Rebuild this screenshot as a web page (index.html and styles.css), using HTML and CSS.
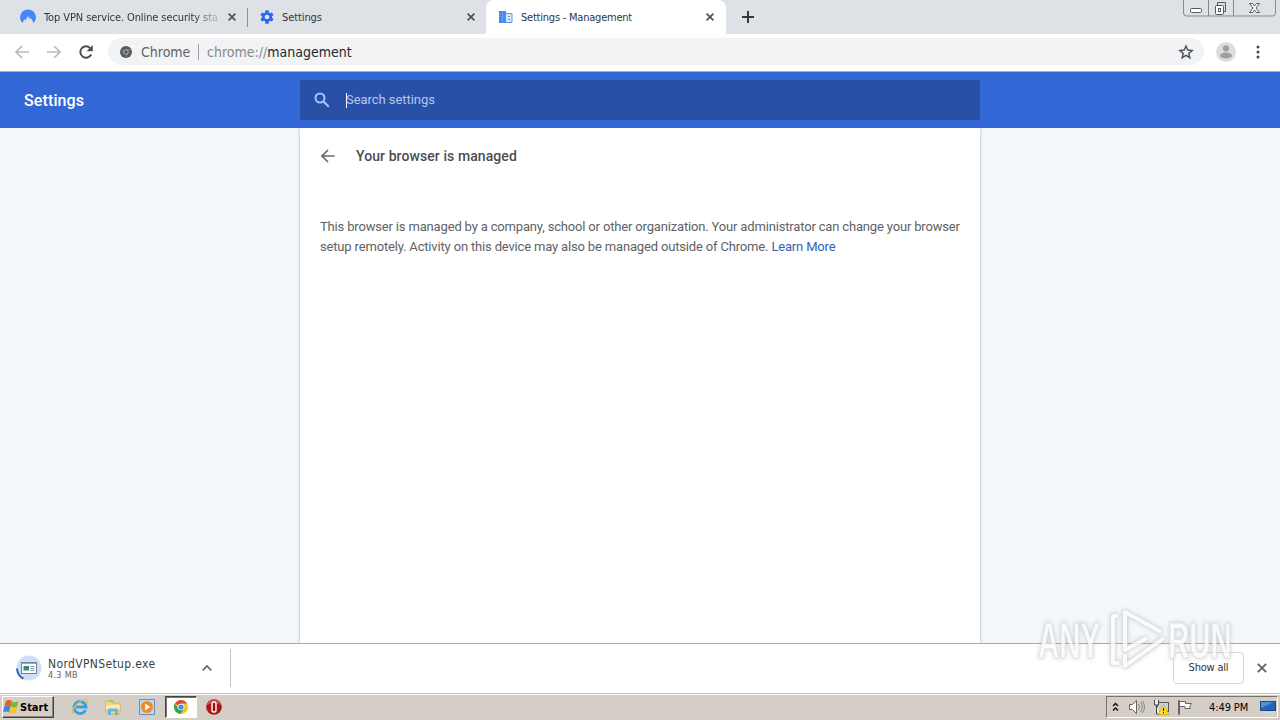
FILE: index.html
```html
<!DOCTYPE html>
<html lang="en">
<head>
    <meta charset="UTF-8">
    <meta name="viewport" content="width=device-width, initial-scale=1.0">
    <title>Settings - Management</title>
    <link rel="stylesheet" href="styles.css">
</head>
<body>
    <div class="screen">
        <!-- Tab strip -->
        <div class="tabs">
            <div class="tab tab-nord">
                <svg class="favicon" viewBox="0 0 16 16"><path d="M2.2 14A8 8 0 1 1 13.8 14L10.6 8.8 9.8 10.3 8 7 5.2 11.4 4.8 10.2Z" fill="#4687ff"/></svg>
                <span class="tab-title fade">Top VPN service. Online security sta</span>
                <svg class="close" viewBox="0 0 8 8"><path d="M.6.6l6.8 6.8M7.4.6L.6 7.4"/></svg>
            </div>
            <div class="tab tab-settings">
                <svg class="favicon" viewBox="0 0 24 24"><path fill="#2a6ae8" fill-rule="evenodd" d="M21 13.1a8 8 0 0 0 0-2.2l2.2-1.8-2.3-4-2.8 1.1a9 9 0 0 0-1.8-1L15.8 2h-4.700L10.600 5.200a9 9 0 0 0-1.800 1L5.900 5.100l-2.300 4 2.300 1.800a8 8 0 0 0 0 2.200l-2.300 1.800 2.300 4 2.900-1.100a9 9 0 0 0 1.800 1l.5 3.200h4.700l.5-3.200a9 9 0 0 0 1.800-1l2.800 1.100 2.300-4zM13.400 8.500a3.500 3.500 0 1 1 0 7 3.500 3.500 0 0 1 0-7z" transform="translate(-1.4 0)"/></svg>
                <span class="tab-title">Settings</span>
                <svg class="close" viewBox="0 0 8 8"><path d="M.6.6l6.8 6.8M7.4.6L.6 7.4"/></svg>
            </div>
            <div class="tab tab-active">
                <svg class="favicon" viewBox="0 0 16 16"><path d="M1 2h7v12H1z" fill="#4285f4"/><path d="M8 4.500h6v9H8" fill="#dce8fd" stroke="#5c93f5"/><path d="M10 7.500h2M10 10.500h2" stroke="#5c93f5"/><path d="M1 5h7M1 8h7M1 11h7M4.500 2v12" stroke="#7eabf9" stroke-width=".5"/></svg>
                <span class="tab-title">Settings - Management</span>
                <svg class="close" viewBox="0 0 8 8"><path d="M.6.6l6.8 6.8M7.4.6L.6 7.4"/></svg>
            </div>
            <svg class="new-tab" viewBox="0 0 12 12"><path d="M6 0v12M0 6h12" stroke="#33373c" stroke-width="2"/></svg>
            <div class="window-buttons">
                <svg viewBox="0 0 93 17" fill="none" stroke="#555a62"><path d="M.5 0v13q0 3 3 3h86q3 0 3-3V0M25.500 0v16M50.500 0v16" stroke="#858991"/><rect x="7.500" y="8.500" width="11" height="4" rx="1" fill="#fff"/><path d="M34.500 5.500v-3h8v9h-2"/><rect x="32.500" y="5.500" width="8" height="9" rx="1" fill="#fff"/><rect x="35.500" y="8.500" width="2" height="3"/><path d="M66.500 3.500h3l2 2.500 2-2.500h3l-3.500 4.500 3.500 4.500h-3l-2-2.500-2 2.500h-3L70 8z" fill="#fff"/></svg>
            </div>
        </div>

        <!-- Toolbar -->
        <div class="toolbar">
            <svg class="nav" viewBox="0 0 16 16"><path d="M15 8H2M8 2L2 8l6 6" stroke="#b9babd"/></svg>
            <svg class="nav" viewBox="0 0 16 16"><path d="M1 8h13M8 2l6 6-6 6" stroke="#b9babd"/></svg>
            <svg class="nav" viewBox="0 0 16 16"><path d="M13.200 10.500A5.700 5.700 0 1 1 12.500 4.500" stroke="#4c4f54" stroke-width="2"/><path d="M14.800 1v6.200H8.600z" fill="#4c4f54"/></svg>
            <div class="omnibox">
                <svg class="chrome-mono" viewBox="0 0 12 12"><circle cx="6" cy="6" r="6" fill="#55595e"/><circle cx="6" cy="6" r="2.300" fill="#55595e" stroke="#c9ccd0" stroke-width=".8"/><path d="M6 3.700h5M3.900 7.200L1.400 3.200M8 7.200L6 11" stroke="#b6babe" stroke-width=".5"/></svg>
                <span class="scheme">Chrome</span>
                <span class="divider"></span>
                <span class="url"><span class="url-dim">chrome://</span>management</span>
                <svg class="star" viewBox="0 0 24 24"><path d="M12 3l2.600 6.100 6.600.6-5 4.300 1.500 6.500L12 17l-5.700 3.500L7.800 14l-5-4.300 6.600-.6z" fill="none" stroke="#4f5358" stroke-width="2.200"/></svg>
            </div>
            <svg class="avatar" viewBox="0 0 20 20"><circle cx="10" cy="10" r="10" fill="#dcdddf"/><circle cx="10" cy="6.400" r="3.100" fill="#9c9ea1"/><ellipse cx="10" cy="13.500" rx="6" ry="3" fill="#9c9ea1"/></svg>
            <svg class="kebab" viewBox="0 0 4 14"><g fill="#45484c"><circle cx="2" cy="2" r="1.500"/><circle cx="2" cy="7" r="1.500"/><circle cx="2" cy="12" r="1.500"/></g></svg>
        </div>

        <!-- Settings header -->
        <div class="header">
            <h1 class="header-title">Settings</h1>
            <div class="search">
                <svg class="search-icon" viewBox="0 0 16 16"><circle cx="6" cy="6" r="4.500"/><path d="M9.300 9.300l5.500 5.500"/></svg>
                <span class="caret"></span>
                <span class="search-text">Search settings</span>
            </div>
        </div>

        <div class="content">
            <div class="card">
                <div class="card-head">
                    <svg class="back" viewBox="0 0 14 14"><path d="M13.500 7H1.500M7 1L1 7l6 6"/></svg>
                    <h2 class="card-title">Your browser is managed</h2>
                </div>
                <p class="message">This browser is managed by a company, school or other organization. Your administrator can change your browser<br>setup remotely. Activity on this device may also be managed outside of Chrome. <a class="link">Learn More</a></p>
            </div>
        </div>

        <!-- Download shelf -->
        <div class="shelf">
            <svg class="file-icon" viewBox="0 0 26 26"><circle cx="13" cy="13" r="12.500" fill="#cfe0f5"/><path d="M1 13.500A12 12 0 0 0 7.500 23.700" fill="none" stroke="#2f66c9" stroke-width="2"/><rect x="5.500" y="7.500" width="15" height="11" fill="#fff" stroke="#71808a"/><path d="M5 8h16" stroke="#71909f" stroke-width="1.500"/><path d="M7.500 11h5.500v4.500H7.500z" fill="#3c8577"/><path d="M14.500 11.500h4M14.500 13.500h4M14.500 15.500h4" stroke="#8b9bab"/></svg>
            <div class="file">
                <div class="file-name">NordVPNSetup.exe</div>
                <div class="file-size">4.3 MB</div>
            </div>
            <svg class="chevron" viewBox="0 0 10 6"><path d="M.7 5.300L5 1l4.300 4.300"/></svg>
            <span class="shelf-line"></span>
            <button class="show-all">Show all</button>
            <svg class="shelf-close" viewBox="0 0 10 10"><path d="M.8.8l8.400 8.400M9.200.8L.8 9.200"/></svg>
        </div>

        <!-- Taskbar -->
        <div class="taskbar">
            <div class="start">
                <svg class="flag" viewBox="0 0 16 16"><path d="M3 2q3-2 6 0L7.500 7.500Q4.500 5.500 1.500 7.500z" fill="#e65c23"/><path d="M9 2.500q3 1.500 6.500 0L14 8Q11 9.500 7.500 7.500z" fill="#7bb936"/><path d="M1.500 7.500q3-2 6 0L6 13.500Q3 11.500 0 13.500z" fill="#3b86d8"/><path d="M7.500 8q3 1.500 6.500 0l-1.500 6q-3 1.500-6.500-.5z" fill="#f7c331"/></svg>
                <span class="start-text">Start</span>
            </div>
            <svg class="task task-ie" viewBox="0 0 18 18"><path d="M14.500 12A6 6 0 1 1 15 9H5" fill="none" stroke="#34a2df" stroke-width="2.800"/><path d="M2 15.500C-2 12 12-1 16.500 2c1 1 .5 2.500-.5 4" fill="none" stroke="#e6bd4a" stroke-width="1.300"/></svg>
            <svg class="task task-folder" viewBox="0 0 18 18"><path d="M1.500 3h6l1.500 2h7v11h-14z" fill="#f1d583" stroke="#d8b659"/><path d="M3.500 2h6v3" fill="#8cc879"/><path d="M2 7h14v4H2z" fill="#fbeaae"/><path d="M4 17v-5q0-1.500 1.500-1.500h7q1.500 0 1.500 1.500v5h-3v-3.500H7V17z" fill="#62b7e3"/></svg>
            <svg class="task task-player" viewBox="0 0 18 18"><path d="M1.500 1.500h15v15h-15z" fill="#b9d8f2" stroke="#5b93c8"/><circle cx="9" cy="9" r="6" fill="#f28a1d"/><path d="M7.200 5.500l5 3.500-5 3.500z" fill="#fff"/></svg>
            <div class="task-active">
                <svg class="chrome" viewBox="0 0 14 14"><circle cx="7" cy="7" r="7" fill="#efc52f"/><path d="M7 7L1 3.400A7 7 0 0 1 13.100 3.600H7z" fill="#dc4939"/><path d="M1 3.400A7 7 0 0 0 6.500 14L10 8.800 4 8.500z" fill="#34a353"/><circle cx="7" cy="7" r="3.300" fill="#fff"/><circle cx="7" cy="7" r="2.600" fill="#4586ee"/></svg>
            </div>
            <svg class="task-opera" viewBox="0 0 16 16"><circle cx="8" cy="8" r="7.800" fill="#a91719"/><path d="M1 6a7.200 7.200 0 0 1 14 0Q8 2 1 6" fill="#d74b48"/><rect x="6" y="3" width="4" height="10" rx="1.800" fill="#9d1215" stroke="#fff" stroke-width="1.400"/></svg>
            <div class="tray">
                <svg class="tray-up" viewBox="0 0 7 10"><path d="M1 4l2.500-2.500L6 4M1 8.500L3.500 6 6 8.500" fill="none" stroke="#111" stroke-width="1.500"/></svg>
                <svg class="tray-icon" viewBox="0 0 18 16"><path d="M1.500 5.500h3l4-4v13l-4-4h-3z" fill="#fff" stroke="#666"/><path d="M10.500 5q2 3 0 6M12.500 3q3.500 5 0 10M14.500 2q4 6 0 12" fill="none" stroke="#858585"/></svg>
                <svg class="tray-icon" viewBox="0 0 18 16"><rect x="5.500" y="3.500" width="11" height="9" fill="#c8d0d5" stroke="#555"/><path d="M2.500 1v5h4V1M4.500 6v9h4" fill="#eee" stroke="#444"/><path d="M11.500 5.500l5.500 10H6z" fill="#ffdc25" stroke="#c5a515" stroke-width=".7"/><path d="M11.500 9v3M11.500 13v1.200" stroke="#222"/></svg>
                <svg class="tray-icon" viewBox="0 0 18 16"><path d="M2.500 1.500h1v14h-1zM3.500 2.500h6v2h6l-2 3 1 2H9v-2H3.500z" fill="#fff" stroke="#666"/></svg>
                <span class="clock">4:49 PM</span>
                <svg class="desktop" viewBox="0 0 16 14"><path d="M.5 1.500h15v9H.5z" fill="#2465b9" stroke="#24466e"/><path d="M1 2h13L1 8z" fill="#4b91d8"/><path d="M3 12.500h12" stroke="#bfdcf2" stroke-width="2"/></svg>
            </div>
        </div>

        <!-- Watermark over the page and shelf -->
        <div class="watermark">
            <span class="wm-any">ANY</span>
            <svg class="wm-logo" viewBox="0 0 60 66"><g fill="none" stroke="#d4d6d8" stroke-width="5.400" stroke-linejoin="round"><path d="M53 24L17 4v38l22-12M56 30L17 58V46"/><path d="M10 8H5v47h6"/></g><g fill="none" stroke="#fafbfc" stroke-width="4" stroke-linejoin="round"><path d="M53 24L17 4v38l22-12M56 30L17 58V46"/><path d="M10 8H5v47h6"/></g></svg>
            <span class="wm-run">RUN</span>
        </div>
    </div>
</body>
</html>
```
FILE: styles.css
```css
* {
    margin: 0;
    padding: 0;
    box-sizing: border-box;
}
body {
    font-family: "DejaVu Sans Condensed", "DejaVu Sans", sans-serif;
    background: #fff;
    overflow: hidden;
}
svg {
    display: block;
    flex: none;
}
.screen {
    position: relative;
    width: 1280px;
    height: 720px;
    display: flex;
    flex-direction: column;
    white-space: nowrap;
}

/* tabs */
.tabs {
    height: 34px;
    flex: none;
    display: flex;
    align-items: center;
    background: #dee1e6;
}
.tab {
    height: 34px;
    display: flex;
    align-items: center;
    font-size: 11px;
    color: #33363a;
}
.tab-nord {
    width: 248px;
    padding: 0 12px 0 20px;
    background: linear-gradient(#8c9096, #8c9096) right center / 1px 19px no-repeat;
}
.tab-settings {
    width: 238px;
    padding: 0 11px;
}
.tab-active {
    width: 240px;
    padding: 0 12px;
    background: #fff;
    border-radius: 8px 8px 0 0;
}
.favicon {
    width: 16px;
    height: 16px;
    margin-right: 7px;
}
.tab-title {
    flex: 1;
    letter-spacing: -0.1px;
}
.tab-active .tab-title {
    letter-spacing: -0.22px;
}
.tab-nord .favicon {
    margin-right: 8px;
}
.fade {
    -webkit-mask-image: linear-gradient(90deg, #000 150px, transparent 180px);
    mask-image: linear-gradient(90deg, #000 150px, transparent 180px);
}
.close {
    width: 8px;
    height: 8px;
    stroke: #4d5055;
    stroke-width: 1.7;
}
.new-tab {
    width: 12px;
    height: 12px;
    margin-left: 16px;
}
.window-buttons {
    align-self: flex-start;
    margin-left: auto;
    margin-right: 4px;
}
.window-buttons svg {
    width: 93px;
    height: 17px;
}

/* toolbar */
.toolbar {
    height: 38px;
    flex: none;
    display: flex;
    align-items: center;
    padding: 0 20px 2px 14px;
    border-bottom: 1px solid #8eb4dc;
}
.nav {
    width: 16px;
    height: 16px;
    margin-right: 16px;
    fill: none;
    stroke-width: 1.7;
}
.omnibox {
    width: 1096px;
    height: 27px;
    display: flex;
    align-items: center;
    margin-left: -2px;
    padding: 0 10px 0 12px;
    border-radius: 14px;
    background: #f1f3f4;
    font-size: 14px;
    color: #26282b;
}
.chrome-mono {
    width: 12px;
    height: 12px;
    margin-right: 9px;
}
.scheme {
    width: 57px;
    color: #5f6368;
}
.divider {
    width: 1px;
    height: 16px;
    margin-right: 8px;
    background: #9b9ea2;
}
.url {
    flex: 1;
}
.url-dim {
    color: #85898e;
}
.star {
    width: 16px;
    height: 16px;
}
.avatar {
    width: 20px;
    height: 20px;
    margin-left: 12px;
}
.kebab {
    width: 4px;
    height: 14px;
    margin-left: auto;
}

/* settings page */
.header {
    height: 56px;
    flex: none;
    display: flex;
    align-items: center;
    background: #3367d6;
    font-family: Roboto, sans-serif;
}
.header-title {
    width: 300px;
    padding-left: 24px;
    font-size: 16px;
    font-weight: 500;
    letter-spacing: 0.12px;
    color: #fff;
}
.search {
    width: 680px;
    height: 40px;
    display: flex;
    align-items: center;
    padding-left: 14px;
    background: #2850a7;
    font-size: 13px;
    color: #b3c6ed;
}
.search-text {
    padding-bottom: 2px;
    letter-spacing: -0.05px;
}
.search-icon {
    width: 16px;
    height: 16px;
    margin-right: 16px;
    fill: none;
    stroke: #a9c3f5;
    stroke-width: 2;
}
.caret {
    width: 1px;
    height: 15px;
    margin-right: -1px;
    background: #fff;
}
.content {
    height: 515px;
    flex: none;
    display: flex;
    justify-content: center;
    background: #f5f8fb;
    font-family: Roboto, sans-serif;
    overflow: hidden;
}
.card {
    width: 680px;
    background: #fff;
    box-shadow: 0 0 3px rgba(60, 64, 67, 0.4);
}
.card-head {
    height: 56px;
    display: flex;
    align-items: center;
    padding-left: 21px;
}
.back {
    width: 14px;
    height: 14px;
    margin-right: 21px;
    fill: none;
    stroke: #64676b;
    stroke-width: 1.6;
}
.card-title {
    font-size: 14px;
    font-weight: 500;
    letter-spacing: 0.08px;
    color: #4c4d50;
}
.message {
    padding: 33px 20px 0;
    font-size: 13px;
    line-height: 20px;
    letter-spacing: -0.165px;
    color: #606266;
}
.link {
    color: #3360b8;
}

/* downloads */
.shelf {
    height: 50px;
    flex: none;
    display: flex;
    align-items: center;
    padding: 0 13px 2px 16px;
    background: #fff;
    border-top: 1px solid #a9acae;
}
.file-icon {
    width: 26px;
    height: 26px;
    margin-right: 6px;
}
.file {
    width: 154px;
    padding-top: 2px;
}
.file-name {
    font-size: 12px;
    line-height: 13px;
    letter-spacing: 0.36px;
    color: #3c3f43;
}
.file-size {
    font-size: 9px;
    line-height: 9px;
    letter-spacing: 0.3px;
    color: #5f6368;
}
.chevron {
    width: 10px;
    height: 6px;
    fill: none;
    stroke: #63666a;
    stroke-width: 1.7;
}
.shelf-line {
    width: 1px;
    height: 38px;
    margin-left: 18px;
    background: #c4c6c8;
}
.show-all {
    width: 71px;
    height: 32px;
    margin-left: auto;
    margin-right: 13px;
    border: 1px solid #d6d8db;
    border-radius: 4px;
    background: #fff;
    font-family: inherit;
    font-size: 11px;
    letter-spacing: -0.2px;
    color: #303236;
}
.shelf-close {
    width: 10px;
    height: 10px;
    stroke: #5e6267;
    stroke-width: 1.8;
}

/* taskbar */
.taskbar {
    height: 27px;
    flex: none;
    display: flex;
    align-items: center;
    padding: 0 2px;
    border-top: 1px solid #c9c6c2;
    background: #d4cec7;
    box-shadow: inset 0 1px #f7f5f2;
    color: #000;
}
.start {
    width: 52px;
    height: 22px;
    display: flex;
    align-items: center;
    border: 1px solid;
    border-color: #fff #444 #444 #fff;
    box-shadow: inset -1px -1px #88847f;
}
.flag {
    width: 16px;
    height: 16px;
}
.start-text {
    margin-left: 1px;
    font-size: 11px;
    font-weight: bold;
}
.task {
    width: 18px;
    height: 18px;
}
.task-ie {
    margin-left: 17px;
}
.task-folder {
    margin-left: 15px;
}
.task-player {
    margin-left: 16px;
}
.task-active {
    width: 32px;
    height: 22px;
    display: flex;
    align-items: center;
    justify-content: center;
    margin-left: 9px;
    border: 1px solid;
    border-color: #444 #fff #fff #444;
    box-shadow: inset 1px 1px #77736e;
    background: #fff;
}
.chrome {
    width: 14px;
    height: 14px;
}
.task-opera {
    width: 16px;
    height: 16px;
    margin-left: 9px;
}
.tray {
    width: 172px;
    height: 22px;
    display: flex;
    align-items: center;
    margin-left: auto;
    padding: 0 1px 0 5px;
    border: 1px solid;
    border-color: #77736e #fff #fff #77736e;
    font-size: 11px;
}
.tray-up {
    width: 7px;
    height: 10px;
    margin-right: 9px;
}
.tray-icon {
    width: 18px;
    height: 16px;
    margin-right: 6px;
}
.clock {
    flex: 1;
    margin-left: 9px;
    letter-spacing: -0.1px;
}
.desktop {
    width: 16px;
    height: 14px;
}

/* watermark */
.watermark {
    position: absolute;
    left: 1038px;
    top: 608px;
    height: 66px;
    display: flex;
    align-items: center;
    font-family: "Liberation Sans", sans-serif;
    font-size: 50px;
    line-height: 36px;
    font-weight: bold;
    color: #fafbfc;
    -webkit-text-stroke: 1px #dcdee0;
    filter: drop-shadow(0 0 2px rgba(110, 110, 110, 0.45));
    opacity: 0.8;
}
.wm-any,
.wm-run {
    display: block;
    width: 66px;
    transform: scaleX(0.59);
    transform-origin: left center;
}
.wm-logo {
    width: 60px;
    height: 66px;
    margin-left: 4px;
}
```
